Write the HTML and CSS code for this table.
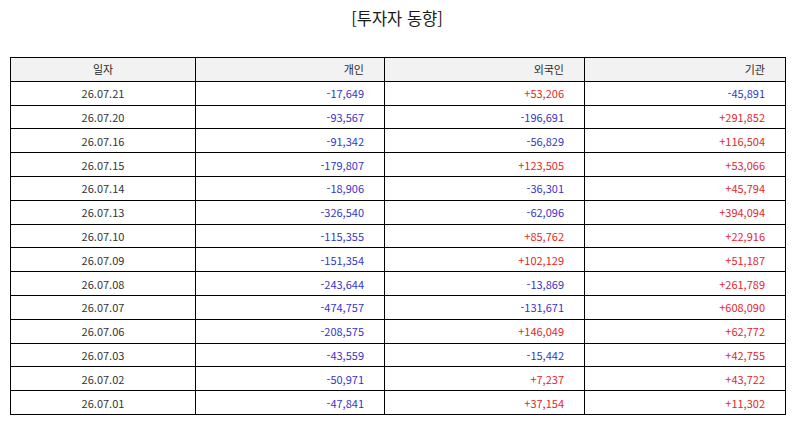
FILE: index.html
```html
<!DOCTYPE html>
<html lang="ko">
<head>
<meta charset="utf-8">
<title>투자자 동향</title>
<link rel="stylesheet" href="styles.css">
</head>
<body>
<div class="page">
  <h1 class="title">[투자자 동향]</h1>
  <table class="trend">
    <colgroup>
      <col class="c-date"><col class="c-ind"><col class="c-for"><col class="c-inst">
    </colgroup>
    <thead>
      <tr><th class="center">일자</th><th>개인</th><th>외국인</th><th>기관</th></tr>
    </thead>
    <tbody>
      <tr><td class="center">26.07.21</td><td class="neg">-17,649</td><td class="pos">+53,206</td><td class="neg">-45,891</td></tr>
      <tr><td class="center">26.07.20</td><td class="neg">-93,567</td><td class="neg">-196,691</td><td class="pos">+291,852</td></tr>
      <tr><td class="center">26.07.16</td><td class="neg">-91,342</td><td class="neg">-56,829</td><td class="pos">+116,504</td></tr>
      <tr><td class="center">26.07.15</td><td class="neg">-179,807</td><td class="pos">+123,505</td><td class="pos">+53,066</td></tr>
      <tr><td class="center">26.07.14</td><td class="neg">-18,906</td><td class="neg">-36,301</td><td class="pos">+45,794</td></tr>
      <tr><td class="center">26.07.13</td><td class="neg">-326,540</td><td class="neg">-62,096</td><td class="pos">+394,094</td></tr>
      <tr><td class="center">26.07.10</td><td class="neg">-115,355</td><td class="pos">+85,762</td><td class="pos">+22,916</td></tr>
      <tr><td class="center">26.07.09</td><td class="neg">-151,354</td><td class="pos">+102,129</td><td class="pos">+51,187</td></tr>
      <tr><td class="center">26.07.08</td><td class="neg">-243,644</td><td class="neg">-13,869</td><td class="pos">+261,789</td></tr>
      <tr><td class="center">26.07.07</td><td class="neg">-474,757</td><td class="neg">-131,671</td><td class="pos">+608,090</td></tr>
      <tr><td class="center">26.07.06</td><td class="neg">-208,575</td><td class="pos">+146,049</td><td class="pos">+62,772</td></tr>
      <tr><td class="center">26.07.03</td><td class="neg">-43,559</td><td class="neg">-15,442</td><td class="pos">+42,755</td></tr>
      <tr><td class="center">26.07.02</td><td class="neg">-50,971</td><td class="pos">+7,237</td><td class="pos">+43,722</td></tr>
      <tr><td class="center">26.07.01</td><td class="neg">-47,841</td><td class="pos">+37,154</td><td class="pos">+11,302</td></tr>
    </tbody>
  </table>
</div>
</body>
</html>
```
FILE: styles.css
```css
html, body {
  margin: 0;
  padding: 0;
  background: #ffffff;
}
body {
  font-family: "Noto Sans CJK KR", "Noto Sans", sans-serif;
  color: #333333;
}
.page {
  padding: 0 10px;
}
.title {
  margin: 0 0 21px 0;
  height: 36px;
  line-height: 36px;
  font-size: 16.5px;
  font-weight: normal;
  text-align: center;
  color: #1a1a1a;
}
.trend {
  width: 775px;
  border-collapse: collapse;
  table-layout: fixed;
  font-size: 11px;
}
.c-date { width: 185px; }
.c-ind { width: 189px; }
.c-for { width: 200px; }
.c-inst { width: 201px; }
.trend th, .trend td {
  border: 1px solid #000000;
  height: 23.8px;
  padding: 0 20px 0 4px;
  text-align: right;
  font-weight: normal;
  line-height: 14px;
  box-sizing: border-box;
}
.trend th {
  background: #f2f2f2;
  color: #2a2a2a;
}
.trend .center {
  text-align: center;
  padding: 0 4px;
}
.neg { color: #3535c8; }
.pos { color: #e3262b; }
```
